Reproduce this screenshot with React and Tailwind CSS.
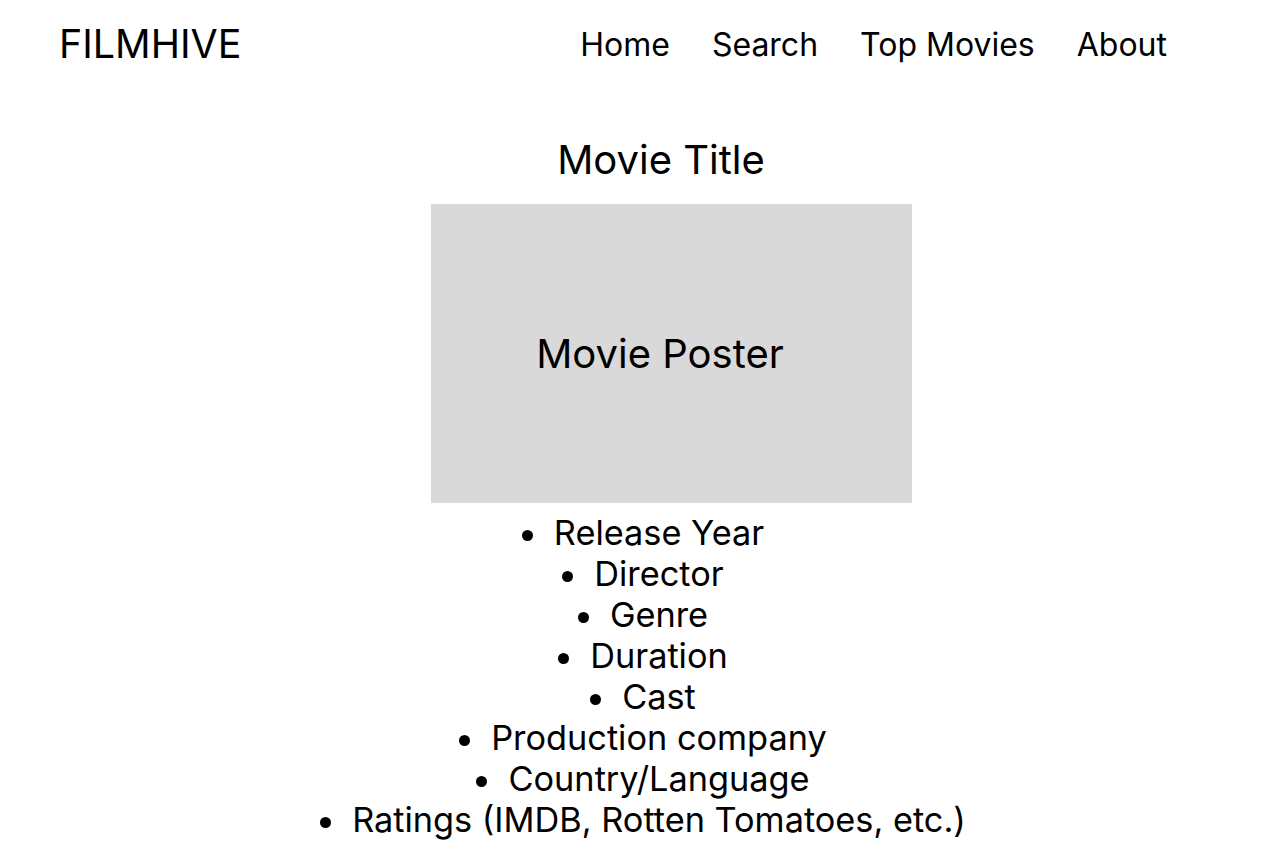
export default function App() {
  const details = [
    'Release Year',
    'Director',
    'Genre',
    'Duration',
    'Cast',
    'Production company',
    'Country/Language',
    'Ratings (IMDB, Rotten Tomatoes, etc.)',
  ]

  return (
    <div className="min-h-screen bg-white text-black" style={{ fontFamily: 'Inter, "Noto Sans", sans-serif' }}>
      <header className="flex items-center justify-between pl-[59px] pr-[113px] h-[90px]">
        <div className="text-[39.4px] leading-none">FILMHIVE</div>
        <nav className="flex gap-[42px] text-[32px] leading-none">
          <a href="#">Home</a>
          <a href="#">Search</a>
          <a href="#">Top Movies</a>
          <a href="#">About</a>
        </nav>
      </header>

      <main className="flex flex-col items-center">
        <h1 className="text-[40px] leading-none mt-[50px] mb-[24px] ml-[42px]">Movie Title</h1>
        <div className="w-[481px] h-[299px] ml-[63px] bg-[#d9d9d9] flex items-center justify-center pr-[23px] text-[40px]">
          Movie Poster
        </div>
        <ul className="text-center text-[34.3px] leading-[41px] mt-[9px] ml-[6px]">
          {details.map((d) => (
            <li key={d}>
              <span className="inline-block w-[11px] h-[11px] rounded-full bg-black align-middle mr-[21px]" />
              {d}
            </li>
          ))}
        </ul>
      </main>
    </div>
  )
}
